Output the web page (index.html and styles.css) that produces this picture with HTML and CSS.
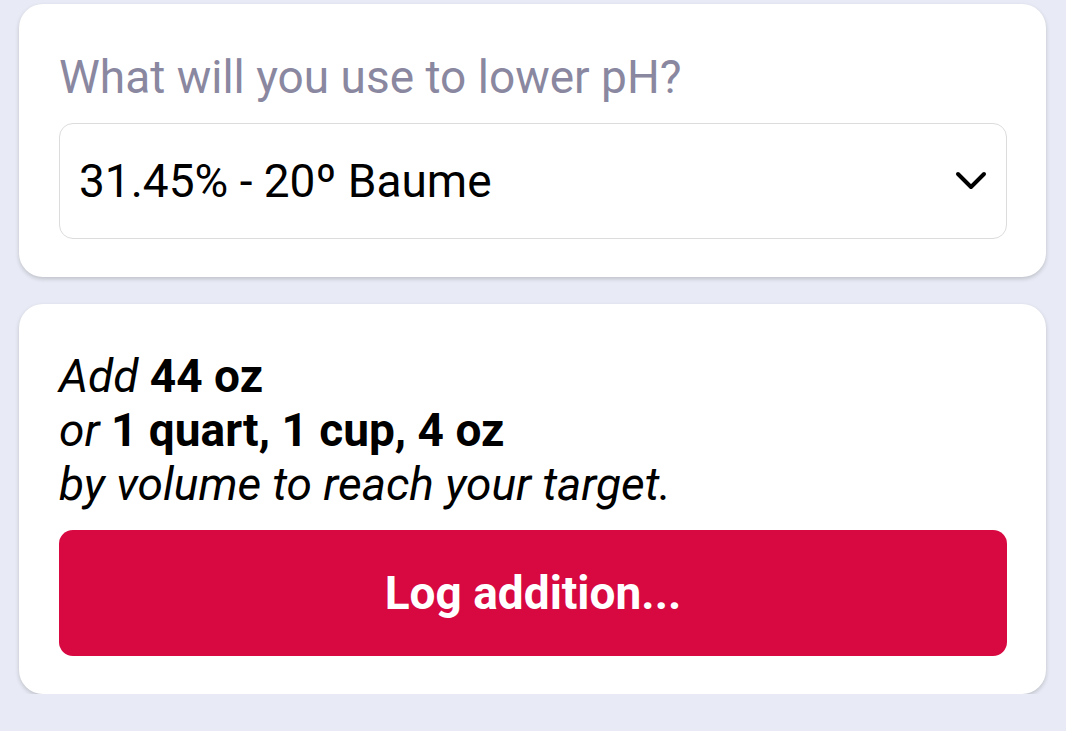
FILE: index.html
```html
<!DOCTYPE html>
<html lang="en">
<head>
    <meta charset="UTF-8">
    <meta name="viewport" content="width=device-width, initial-scale=1.0">
    <title>Lower pH</title>
    <link rel="stylesheet" href="styles.css">
</head>
<body>
    <div class="page">
        <div class="card card-chem">
            <label class="field-label" for="chem">What will you use to lower pH?</label>
            <div class="select-box" id="chem">
                <span class="select-value">31.45% - 20º Baume</span>
                <svg class="chevron" width="32" height="20" viewBox="0 0 32 20">
                    <path d="M3 3 L16 16 L29 3" fill="none" stroke="#000" stroke-width="4" stroke-linecap="round" stroke-linejoin="round"/>
                </svg>
            </div>
        </div>

        <div class="card card-result">
            <p class="result">
                <em>Add</em> <strong>44 oz</strong><br>
                <em>or</em> <strong>1 quart, 1 cup, 4 oz</strong><br>
                <em>by volume to reach your target.</em>
            </p>
            <button class="log-button">Log addition...</button>
        </div>
    </div>
</body>
</html>
```

FILE: styles.css
```css
body {
    margin: 0;
    padding: 0;
    background: #e8ebf5;
    font-family: Roboto, 'Liberation Sans', sans-serif;
    color: #000;
}

.page {
    display: flex;
    flex-direction: column;
    gap: 27px;
    padding: 4px 20px 0 19px;
}

.card {
    background: #fff;
    border-radius: 24px;
    box-shadow: 0 2px 4px rgba(0, 0, 0, 0.18);
    padding: 0 39px 0 40px;
}

.card-chem {
    padding-top: 46px;
    padding-bottom: 38px;
}

.field-label {
    display: block;
    font-size: 46px;
    line-height: 54px;
    color: #8a87a0;
    margin-bottom: 19px;
}

.select-box {
    box-sizing: border-box;
    display: flex;
    align-items: center;
    justify-content: space-between;
    height: 116px;
    border: 1.5px solid #dcdcdc;
    border-radius: 14px;
    padding: 0 19px 0 19px;
}

.select-value {
    font-size: 46px;
    line-height: 54px;
}

.card-result {
    padding-top: 45px;
    padding-bottom: 38px;
}

.result {
    margin: 0 0 19px;
    font-size: 46px;
    line-height: 54px;
}

.result strong {
    font-weight: 700;
}

.log-button {
    display: block;
    width: 100%;
    height: 126px;
    border: none;
    border-radius: 14px;
    background: #d80841;
    color: #fff;
    font-family: Roboto, 'Liberation Sans', sans-serif;
    font-size: 46px;
    font-weight: 700;
    cursor: pointer;
}
```
